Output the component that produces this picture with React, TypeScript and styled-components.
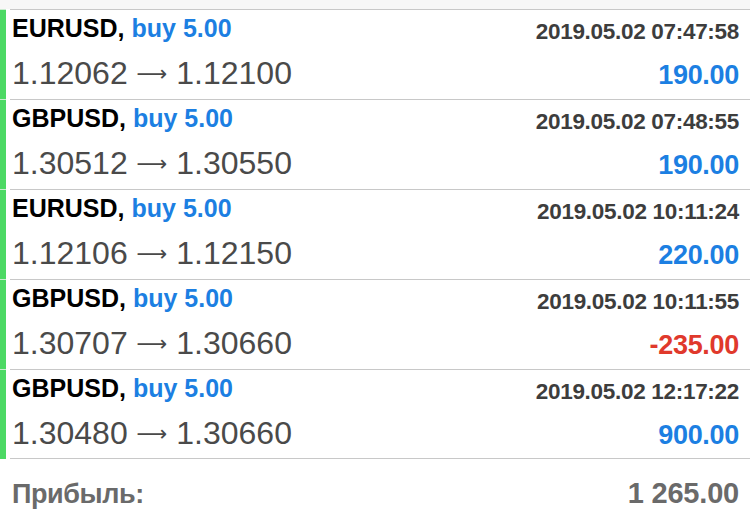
import styled, { createGlobalStyle } from "styled-components";

const GlobalStyle = createGlobalStyle`
  html, body {
    margin: 0;
    padding: 0;
    background: #ffffff;
  }
  body {
    font-family: "Liberation Sans", Arial, sans-serif;
  }
`;

const Page = styled.div`
  width: 750px;
  height: 517px;
  overflow: hidden;
  background: #ffffff;
`;

const TopStrip = styled.div`
  height: 9px;
  background: #f7f7f7;
`;

const List = styled.div`
  display: flex;
  flex-direction: column;
`;

const Row = styled.div`
  display: flex;
  height: 90px;
`;

const Bar = styled.div`
  width: 6px;
  flex-shrink: 0;
  background: #4cd964;
  border-top: 1px solid #c9eccf;
`;

const Body = styled.div<{ $last?: boolean }>`
  flex: 1;
  margin-left: 4px;
  padding: 4px 11px 0 2px;
  border-top: 1px solid #c8c8c8;
  border-bottom: ${({ $last }) => ($last ? "1px solid #c8c8c8" : "none")};
  display: flex;
  flex-direction: column;
  gap: 9px;
`;

const Line = styled.div<{ $baseline?: boolean }>`
  display: flex;
  justify-content: space-between;
  align-items: ${({ $baseline }) => ($baseline ? "baseline" : "flex-start")};
`;

const Title = styled.div`
  font-size: 25px;
  line-height: 28px;
  font-weight: 700;
  color: #000000;
`;

const Side = styled.span`
  color: #1c7fe2;
`;

const Time = styled.div`
  margin-top: 4px;
  font-size: 22.5px;
  line-height: 28px;
  font-weight: 700;
  color: #3d3d3d;
  letter-spacing: -0.3px;
`;

const Prices = styled.div`
  font-size: 32px;
  line-height: 36px;
  font-weight: 400;
  color: #4a4a4a;
`;

const Arrow = styled.span`
  font-family: "DejaVu Sans", sans-serif;
  font-size: 21.5px;
  vertical-align: 3px;
`;

const Profit = styled.div<{ $negative?: boolean }>`
  font-size: 27px;
  line-height: 36px;
  font-weight: 700;
  letter-spacing: -0.3px;
  color: ${({ $negative }) => ($negative ? "#e0392c" : "#1c7fe2")};
`;

const Footer = styled.div`
  display: flex;
  justify-content: space-between;
  align-items: baseline;
  padding: 17px 11px 0 12px;
`;

const FooterLabel = styled.div`
  font-size: 27px;
  line-height: 34px;
  font-weight: 700;
  color: #6a6a6a;
  letter-spacing: -0.4px;
`;

const FooterTotal = styled(FooterLabel)`
  font-size: 29px;
  letter-spacing: -0.2px;
`;

interface Deal {
  symbol: string;
  volume: string;
  time: string;
  open: string;
  close: string;
  profit: string;
}

const deals: Deal[] = [
  { symbol: "EURUSD", volume: "5.00", time: "2019.05.02 07:47:58", open: "1.12062", close: "1.12100", profit: "190.00" },
  { symbol: "GBPUSD", volume: "5.00", time: "2019.05.02 07:48:55", open: "1.30512", close: "1.30550", profit: "190.00" },
  { symbol: "EURUSD", volume: "5.00", time: "2019.05.02 10:11:24", open: "1.12106", close: "1.12150", profit: "220.00" },
  { symbol: "GBPUSD", volume: "5.00", time: "2019.05.02 10:11:55", open: "1.30707", close: "1.30660", profit: "-235.00" },
  { symbol: "GBPUSD", volume: "5.00", time: "2019.05.02 12:17:22", open: "1.30480", close: "1.30660", profit: "900.00" },
];

export default function App() {
  return (
    <Page>
      <GlobalStyle />
      <TopStrip />
      <List>
        {deals.map((d, i) => (
          <Row key={i}>
            <Bar />
            <Body $last={i === deals.length - 1}>
              <Line>
                <Title>
                  {d.symbol}, <Side>buy {d.volume}</Side>
                </Title>
                <Time>{d.time}</Time>
              </Line>
              <Line $baseline>
                <Prices>
                  {d.open} <Arrow>⟶</Arrow> {d.close}
                </Prices>
                <Profit $negative={d.profit.startsWith("-")}>{d.profit}</Profit>
              </Line>
            </Body>
          </Row>
        ))}
      </List>
      <Footer>
        <FooterLabel>Прибыль:</FooterLabel>
        <FooterTotal>1 265.00</FooterTotal>
      </Footer>
    </Page>
  );
}
